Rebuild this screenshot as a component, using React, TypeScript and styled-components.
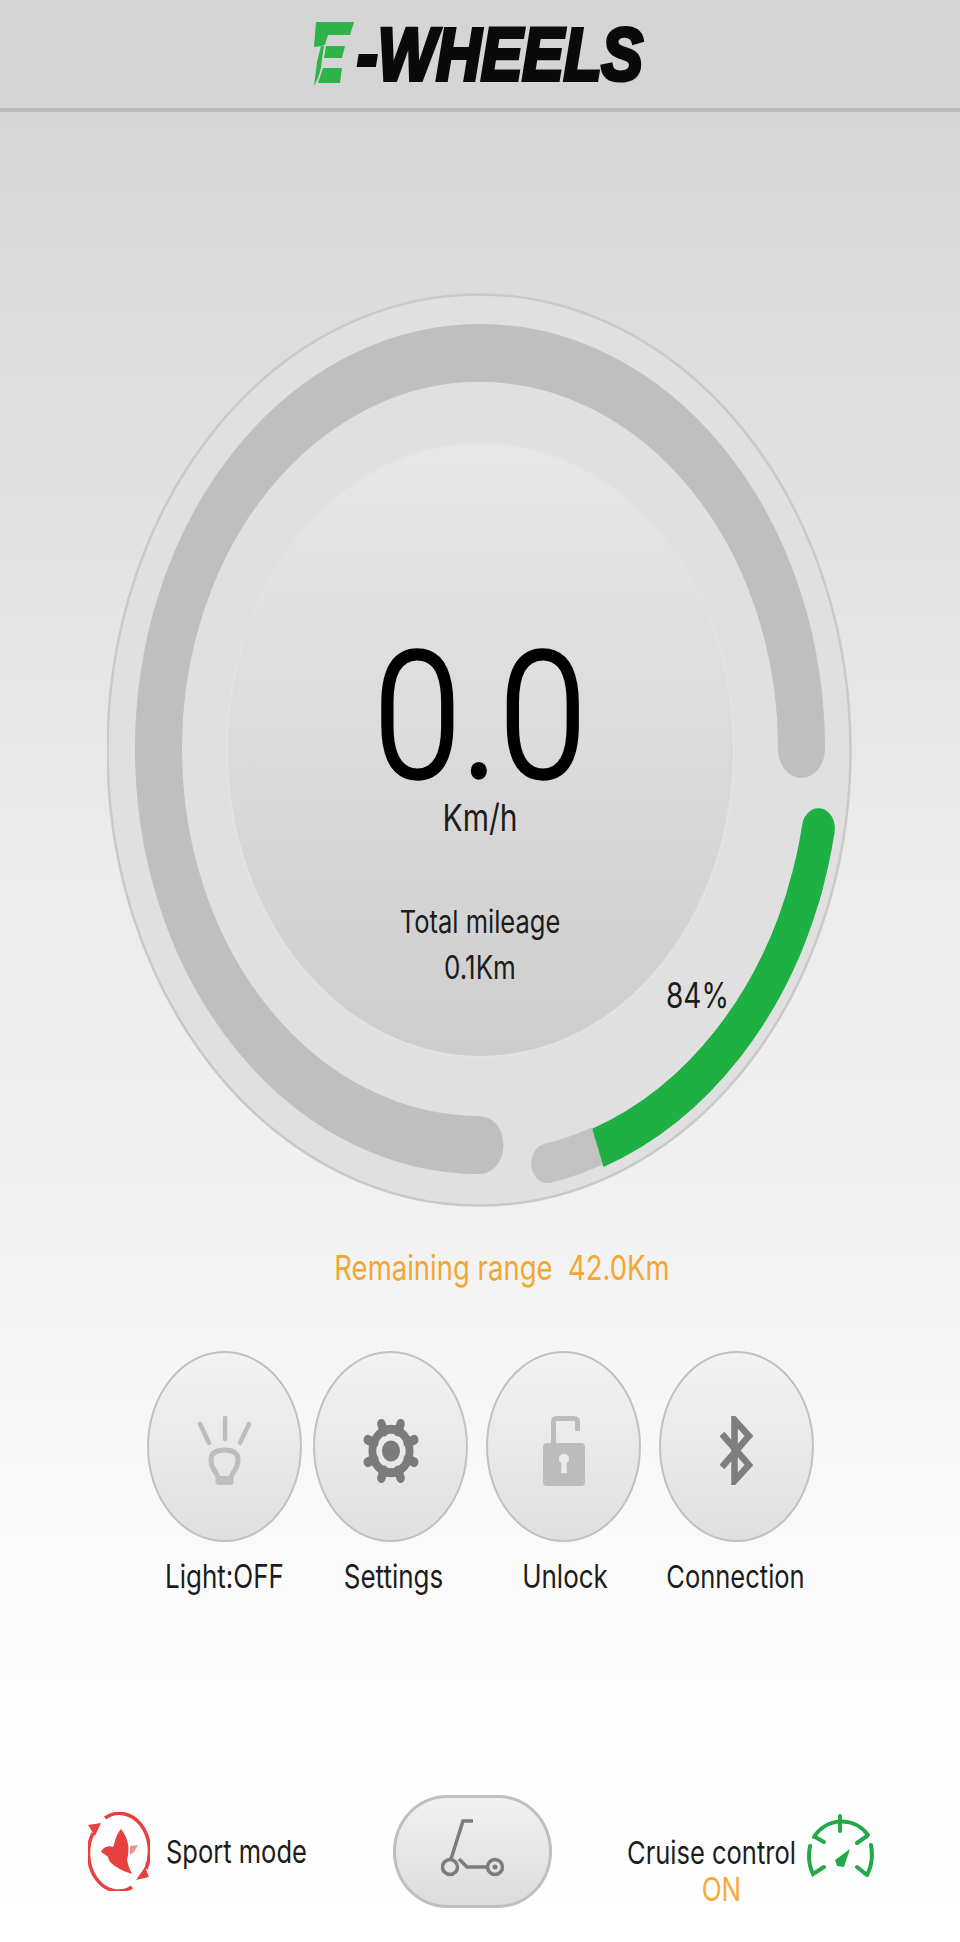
import styled, { createGlobalStyle } from "styled-components";

const GlobalStyle = createGlobalStyle`
  html, body {
    margin: 0;
    padding: 0;
    background: #ffffff;
  }
`;

const Page = styled.div`
  width: 960px;
  height: 1942px;
  overflow: hidden;
  display: flex;
  flex-direction: column;
  font-family: Inter, "Liberation Sans", sans-serif;
  color: #1c1c1c;
  background: linear-gradient(180deg, #d6d6d6 110px, #ebebeb 850px, #f1f1f1 1200px, #fdfdfd 1680px, #ffffff 100%);
`;

const Header = styled.header`
  height: 108px;
  flex: none;
  border-bottom: 4px solid #b9b9b9;
  display: flex;
  align-items: center;
  justify-content: center;
  gap: 3px;
  padding-right: 4px;
  background: #d5d5d5;
`;

const LogoText = styled.span`
  font-family: "Liberation Sans", Arial, sans-serif;
  font-weight: 700;
  font-style: italic;
  font-size: 62px;
  line-height: 62px;
  color: #0a0a0a;
  -webkit-text-stroke: 3.5px #0a0a0a;
  transform: scaleY(1.2);
  margin-top: 2px;
`;

const Dial = styled.section`
  position: relative;
  display: grid;
  justify-items: center;
  align-items: center;
  width: 746px;
  height: 914px;
  margin: 181px auto 0;
  flex: none;
  & > * {
    grid-area: 1 / 1;
  }
`;

const Face = styled.div`
  width: 509px;
  height: 616px;
  box-sizing: border-box;
  border: 2px solid #e3e3e3;
  border-radius: 50%;
  background: linear-gradient(180deg, #e7e7e7 0%, #dcdcdc 45%, #cdcdcd 100%);
  display: flex;
  flex-direction: column;
  align-items: center;
  padding-top: 213px;
  z-index: 1;
`;

const Speed = styled.div`
  font-family: Roboto, sans-serif;
  font-weight: 300;
  font-size: 158px;
  line-height: 120px;
  height: 120px;
  color: #000000;
  -webkit-text-stroke: 3px #000000;
  transform: scaleY(1.12);
`;

const Label = styled.div<{ $top?: number; $left?: number; $color?: string; $size?: number }>`
  font-size: ${(p) => p.$size ?? 26}px;
  line-height: 40px;
  height: 40px;
  white-space: nowrap;
  margin-top: ${(p) => p.$top ?? 0}px;
  margin-left: ${(p) => p.$left ?? 0}px;
  color: ${(p) => p.$color ?? "#1c1c1c"};
  transform: scaleY(1.24);
`;

const Battery = styled(Label)`
  position: absolute;
  left: 559px;
  top: 683px;
  z-index: 2;
`;

const RangeText = styled(Label)`
  align-self: center;
  margin-top: 41px;
  flex: none;
`;

const Tools = styled.div`
  display: flex;
  gap: 18px;
  margin: 63px 0 0 147px;
  flex: none;
  & > :first-child {
    margin-right: -7px;
  }
`;

const Tool = styled.div`
  width: 155px;
  display: flex;
  flex-direction: column;
  align-items: center;
`;

const RoundButton = styled.button`
  width: 155px;
  height: 191px;
  padding: 8px 0 0;
  box-sizing: border-box;
  border: 2.5px solid #c1c1c1;
  border-radius: 50%;
  background: linear-gradient(180deg, #f2f2f2 0%, #e0e0e0 100%);
  display: flex;
  align-items: center;
  justify-content: center;
`;

const Footer = styled.footer`
  display: flex;
  align-items: center;
  height: 113px;
  margin-top: 198px;
  padding-left: 88px;
  flex: none;
`;

const Mode = styled.div`
  width: 305px;
  display: flex;
  align-items: center;
  gap: 16px;
`;

const ScooterButton = styled.button`
  width: 159px;
  height: 113px;
  padding: 0 0 8px;
  flex: none;
  box-sizing: border-box;
  border: 3px solid #bfbfbf;
  border-radius: 54px / 56px;
  background: linear-gradient(180deg, #f1f1f1 0%, #dcdcdc 100%);
  display: flex;
  align-items: center;
  justify-content: center;
`;

const Cruise = styled.div`
  display: flex;
  align-items: flex-start;
  gap: 11px;
  margin-left: 75px;
`;

const CruiseText = styled.div`
  display: flex;
  flex-direction: column;
  align-items: center;
  margin-top: 39px;
`;

const CruiseIcon = styled.svg`
  margin-top: 20px;
`;

// ring is a circle in its own units, stretched to the ellipse by the group transform
const point = (r: number, deg: number) => {
  const a = (deg * Math.PI) / 180;
  return `${(r * Math.cos(a)).toFixed(2)} ${(r * Math.sin(a)).toFixed(2)}`;
};
const arc = (r: number, from: number, to: number) => {
  const large = Math.abs(to - from) > 180 ? 1 : 0;
  const sweep = to > from ? 1 : 0;
  return `M${point(r, from)} A${r} ${r} 0 ${large} ${sweep} ${point(r, to)}`;
};

const Ring = () => (
  <svg width="746" height="914" viewBox="-373 -457 746 914">
    <ellipse cx="-1" cy="0" rx="371.5" ry="455.5" fill="#e0e0e0" stroke="#c9c9c9" strokeWidth="2.5" />
    <g transform="translate(0 -1) scale(1 1.232)">
      <path d={arc(321.5, 0, -270)} fill="none" stroke="#bfbfbf" strokeWidth="47" strokeLinecap="round" />
      <path d={arc(343, 78.7, 74)} fill="none" stroke="#c2c2c2" strokeWidth="32" strokeLinecap="round" />
      <path d={arc(343, 74, 70)} fill="none" stroke="#c2c2c2" strokeWidth="32" />
      <path d={arc(344.5, 10.8, 20)} fill="none" stroke="#1fb043" strokeWidth="33" strokeLinecap="round" />
      <path d={arc(344.5, 18, 70)} fill="none" stroke="#1fb043" strokeWidth="33" />
    </g>
  </svg>
);

const LogoMark = () => (
  <svg width="41" height="64" viewBox="0 0 41 64">
    <g fill="#2db34a">
      <polygon points="3,0 41,0 37,13 15,13 12,23 8,24 1,25" />
      <polygon points="8,24 11,24 9,37 8,46 5,56 1,64 4,40" />
      <polygon points="13,24 32,24 29,36 11,36" />
      <polygon points="10,46 29,46 27,61 5,61" />
    </g>
  </svg>
);

const LightIcon = () => (
  <svg width="54" height="70" viewBox="0 0 54 70">
    <g fill="none" stroke="#bdbdbd" strokeWidth="4.5" strokeLinecap="round">
      <path d="M2 8 L11 27" />
      <path d="M27 2 L27 23" />
      <path d="M51 8 L42 27" />
      <path d="M20 66 V61 C18 55 13 53 13 44 C13 37 18 34 26.500 34 C35 34 40 37 40 44 C40 53 35 55 33 61 V66 Z" strokeLinejoin="round" strokeWidth="5" />
    </g>
    <rect x="19" y="60" width="15" height="9" rx="2" fill="#bdbdbd" />
  </svg>
);

const GearIcon = () => (
  <svg width="60" height="70" viewBox="-50 -50 100 100" preserveAspectRatio="none">
    {[22.5, 67.5, 112.5, 157.5, 202.5, 247.5, 292.5, 337.5].map((deg) => (
      <path key={deg} d={`M${point(30, deg)} L${point(42, deg)}`} stroke="#7b7b7b" strokeWidth="14" strokeLinecap="round" />
    ))}
    <circle r="31" fill="none" stroke="#7b7b7b" strokeWidth="13" />
    <circle r="15" fill="#7b7b7b" />
  </svg>
);

const LockIcon = () => (
  <svg width="42" height="70" viewBox="0 0 42 70">
    <path d="M10.500 28 V6 Q10.500 2.500 14 2.500 H31 Q34.500 2.500 34.500 6 V15" fill="none" stroke="#bcbcbc" strokeWidth="5" />
    <rect x="0" y="27" width="42" height="43" rx="4" fill="#bcbcbc" />
    <path d="M21 38 C24 38 26 40 26 43 C26 45 25 46 23.500 47 L24 57 H18 L18.500 47 C17 46 16 45 16 43 C16 40 18 38 21 38 Z" fill="#ececec" />
  </svg>
);

const BluetoothIcon = () => (
  <svg width="33" height="69" viewBox="0 0 33 69">
    <path d="M2 18 L29 49 L14.500 65 V4 L29 20 L2 51" fill="none" stroke="#7e7e7e" strokeWidth="6.500" />
  </svg>
);

const SportIcon = () => (
  <svg width="62" height="79" viewBox="0 0 62 79">
    <g fill="none" stroke="#e8403f" strokeWidth="3.500">
      <path d="M17 6 A30 38 0 0 1 58 57" />
      <path d="M44 75 A30 38 0 0 1 5 21" />
    </g>
    <g fill="#e8403f">
      <polygon points="0,13 13,11 7,24" />
      <polygon points="61,65 48,68 57,55" />
      <path d="M13 40 C15 35 21 33 25 35 C27 31 27 24 33 17 C36 21 39 26 40 32 C41 38 40 44 39 48 C40 53 42 58 44 62 C39 60 35 59 30 56 C25 53 21 50 20 45 C18 43 15 41 13 40 Z" />
    </g>
    <polygon points="42,34 50,33 46,40 42,43" fill="#f0908c" />
  </svg>
);

const CruiseDial = () => (
  <CruiseIcon width="67" height="63" viewBox="0 0 67 63">
    <g fill="none" stroke="#22a94a" strokeWidth="4" strokeLinecap="round">
      <path d="M7 23 A33 34 0 0 1 61 21" />
      <path d="M8 23 L17 28" />
      <path d="M33 2 V17" />
      <path d="M60 22 L50 29" />
      <path d="M3 32 Q0 48 6 60 L17 53" />
      <path d="M64 31 Q67 48 60 61 L50 53" />
    </g>
    <polygon points="43,35 28,46 30,52 37,53" fill="#22a94a" />
  </CruiseIcon>
);

const ScooterIcon = () => (
  <svg width="64" height="59" viewBox="0 0 64 59">
    <g fill="none" stroke="#7c7c7c" strokeWidth="3.500">
      <path d="M32 3 H22 L10 41" />
      <path d="M18 41 L26 49 H46" />
      <circle cx="9" cy="49" r="7.500" />
      <circle cx="54" cy="49" r="7.500" />
    </g>
    <circle cx="54" cy="49" r="2.500" fill="#7c7c7c" />
  </svg>
);

const tools = [
  { name: "Light:OFF", icon: <LightIcon />, nudge: 0 },
  { name: "Settings", icon: <GearIcon />, nudge: 6 },
  { name: "Unlock", icon: <LockIcon />, nudge: 3 },
  { name: "Connection", icon: <BluetoothIcon />, nudge: -2 },
];

function App() {
  return (
    <Page>
      <GlobalStyle />
      <Header>
        <LogoMark />
        <LogoText>-WHEELS</LogoText>
      </Header>

      <Dial>
        <Ring />
        <Face>
          <Speed>0.0</Speed>
          <Label $top={20} $size={30}>Km/h</Label>
          <Label $top={65} $size={25.500}>Total mileage</Label>
          <Label $top={6}>0.1Km</Label>
        </Face>
        <Battery $size={28}>84%</Battery>
      </Dial>

      <RangeText $color="#f2a733" $size={27.500} $left={44}>Remaining range&nbsp; 42.0Km</RangeText>

      <Tools>
        {tools.map((tool) => (
          <Tool key={tool.name}>
            <RoundButton>{tool.icon}</RoundButton>
            <Label $top={15} $left={tool.nudge} $size={tool.name === "Connection" ? 25.500 : 26}>{tool.name}</Label>
          </Tool>
        ))}
      </Tools>

      <Footer>
        <Mode>
          <SportIcon />
          <Label $size={25.500}>Sport mode</Label>
        </Mode>
        <ScooterButton>
          <ScooterIcon />
        </ScooterButton>
        <Cruise>
          <CruiseText>
            <Label $size={25.500}>Cruise control</Label>
            <Label $top={-3} $left={20} $color="#f5ab3a">ON</Label>
          </CruiseText>
          <CruiseDial />
        </Cruise>
      </Footer>
    </Page>
  );
}

export default App;
